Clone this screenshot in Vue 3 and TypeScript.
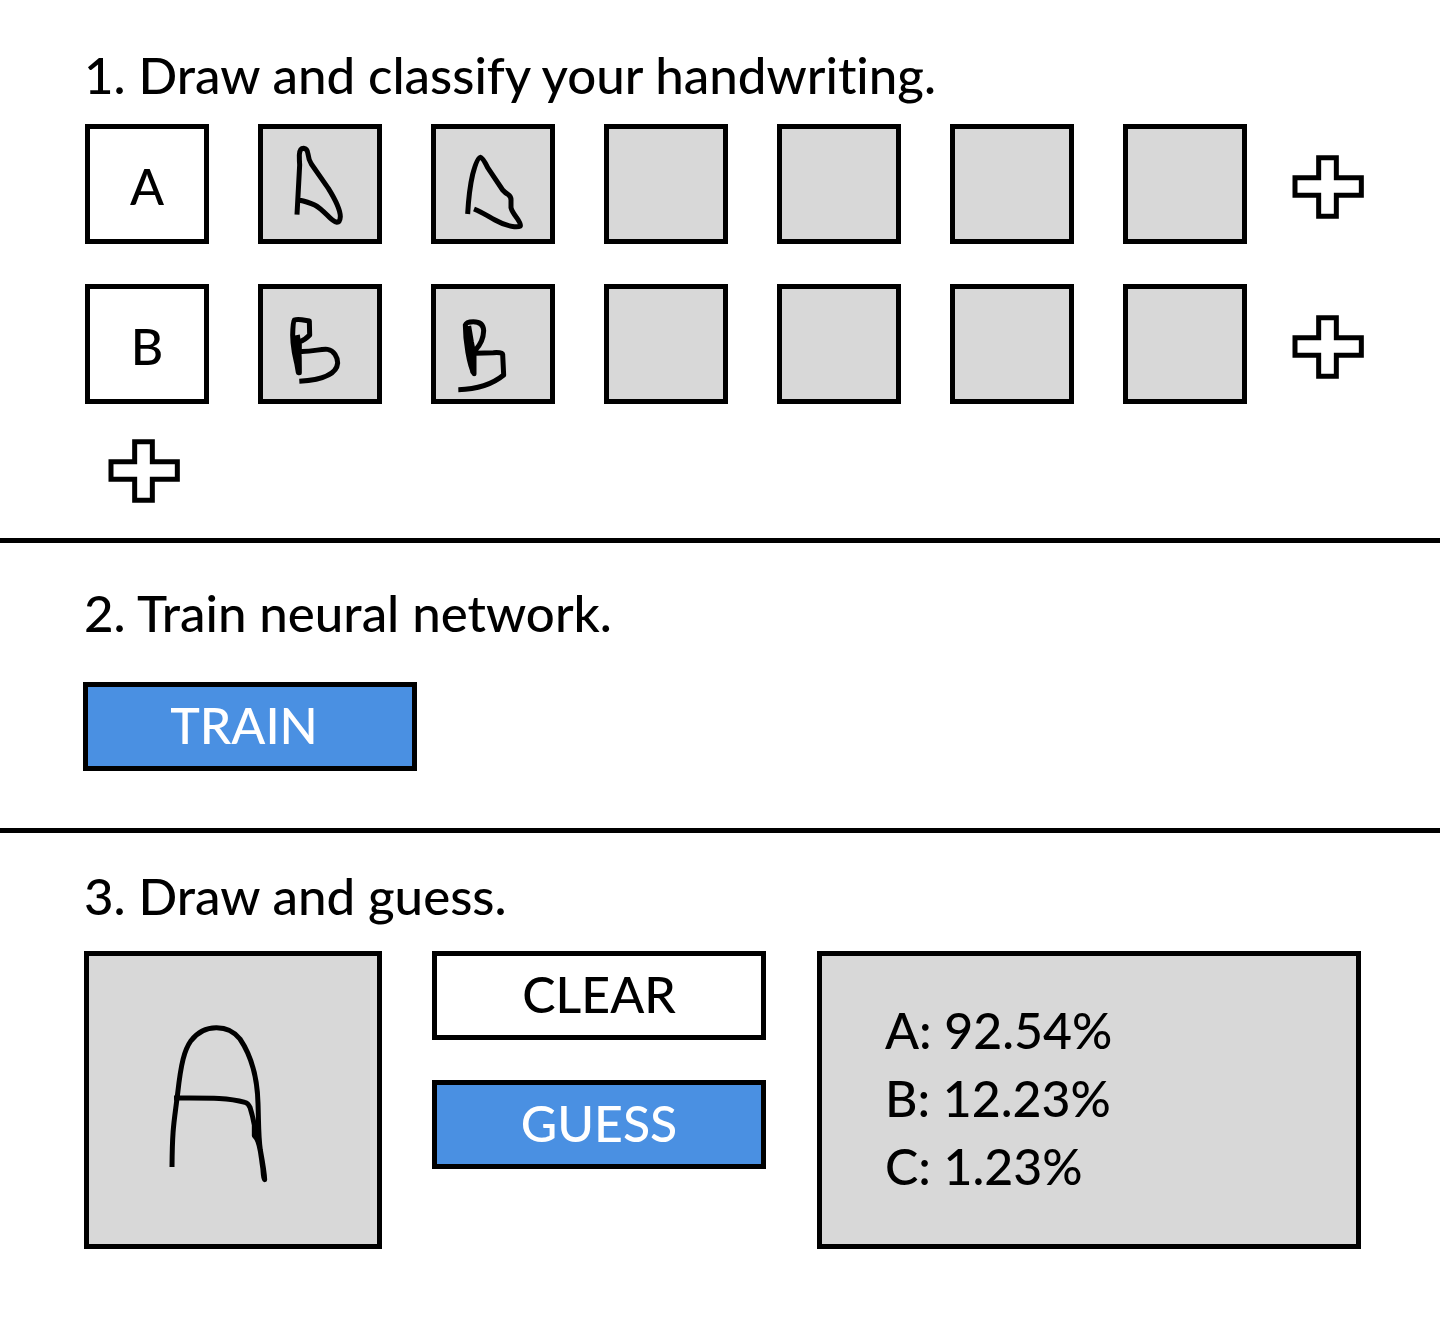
<script setup lang="ts">
interface Sketch {
  viewBox: string
  path: string
}

interface SampleRow {
  label: string
  samples: (Sketch | null)[]
}

interface Guess {
  label: string
  score: string
}

const plusPath = 'M116 53H169V113H244V166H169V229H116V166H45V113H116Z'

const rows: SampleRow[] = [
  {
    label: 'A',
    samples: [
      {
        viewBox: '39 42 342 330',
        path: 'M141 299L149 150C148 138 148 132 148 120Q149 100 161 100Q172 101 174 117Q176 134 184 147L235 220Q271 278 271 305Q270 322 261 322Q250 320 232 301Q208 277 194 270Q175 261 146 255',
      },
      {
        viewBox: '33 42 342 330',
        path: 'M128 297Q132 225 143 178Q156 129 166 127Q173 128 188 158L233 225Q240 233 250 239Q259 245 258 258V278Q261 290 275 308Q288 327 286 333Q281 336 268 335Q240 332 210 315C188 303 170 291 147 282',
      },
      null,
      null,
      null,
      null,
    ],
  },
  {
    label: 'B',
    samples: [
      {
        viewBox: '39 42 342 330',
        path: 'M142 180C149 215 148 260 148 293C138 260 128 215 128 180Q129 140 133 135Q140 132 155 134L178 138L179 180Q165 195 148 201V229C205 232 235 208 255 238Q263 250 263 264C260 300 210 315 148 319M148 293L145 293L136 240L136 190',
      },
      {
        viewBox: '33 42 342 330',
        path: 'M131 153L139 200L147 240V296C133 270 121 200 121 150Q124 140 145 140Q175 140 176 167Q175 200 152 224V235L205 233Q232 231 233 238L236 300Q185 342 100 344M147 294L143 290L134 240L130 180M147 294L141 240L135 190',
      },
      null,
      null,
      null,
      null,
    ],
  },
]

const drawing: Sketch = {
  viewBox: '42 48 864 864',
  path: 'M291 681C292 560 297 550 308 460C318 370 328 330 348 302C388 250 460 252 495 297C530 349 547 410 549 490C551 545 550 590 556 630Q568 695 569 719C563 710 566 695 562 675C557 640 555 600 538 587V555Q533 528 525 502Q519 489 510 487C455 472 400 474 297 474',
}

const guesses: Guess[] = [
  { label: 'A', score: '92.54%' },
  { label: 'B', score: '12.23%' },
  { label: 'C', score: '1.23%' },
]
</script>

<template>
  <main class="page">
    <section class="step collect">
      <h2>1. Draw and classify your handwriting.</h2>
      <div class="rows">
        <div v-for="row in rows" :key="row.label" class="row">
          <div class="cell label">{{ row.label }}</div>
          <div v-for="(sample, i) in row.samples" :key="i" class="cell sample">
            <svg v-if="sample" :viewBox="sample.viewBox" class="sketch">
              <path :d="sample.path" />
            </svg>
          </div>
          <button type="button" class="add add-sample" :aria-label="`Add sample for ${row.label}`">
            <svg viewBox="36 45 216 192" class="plus"><path :d="plusPath" /></svg>
          </button>
        </div>
      </div>
      <button type="button" class="add add-row" aria-label="Add class">
        <svg viewBox="36 45 216 192" class="plus"><path :d="plusPath" /></svg>
      </button>
    </section>

    <section class="step train">
      <h2>2. Train neural network.</h2>
      <button type="button" class="action primary train-action">TRAIN</button>
    </section>

    <section class="step guess">
      <h2>3. Draw and guess.</h2>
      <div class="board">
        <div class="pad">
          <svg :viewBox="drawing.viewBox" class="sketch"><path :d="drawing.path" /></svg>
        </div>
        <div class="actions">
          <button type="button" class="action">CLEAR</button>
          <button type="button" class="action primary">GUESS</button>
        </div>
        <ul class="results">
          <li v-for="g in guesses" :key="g.label">{{ g.label }}: {{ g.score }}</li>
        </ul>
      </div>
    </section>
  </main>
</template>

<style>
body {
  margin: 0;
  background: #fff;
}
</style>

<style scoped>
.page {
  color: #000;
  font-family: Lato, "Open Sans", sans-serif;
  font-size: 50px;
  font-variant-ligatures: none;
  font-weight: 500;
  line-height: 60px;
}

.step {
  box-sizing: border-box;
  padding: 0 79px 0 84px;
}

.step + .step {
  border-top: 5px solid #000;
}

h2 {
  margin: 0;
  font-size: 51px;
  font-weight: 500;
}

.collect {
  padding: 45px 76px 35px 84px;
}

.rows {
  display: flex;
  flex-direction: column;
  gap: 40px;
  margin: 19px 0 0 1px;
}

.row {
  display: flex;
  align-items: center;
  gap: 49px;
}

.cell {
  display: flex;
  flex: none;
  align-items: center;
  justify-content: center;
  box-sizing: border-box;
  width: 124px;
  height: 120px;
  border: 5px solid #000;
}

.label {
  padding-top: 3px;
}

.sample,
.pad,
.results {
  background: #d8d8d8;
}

.sketch {
  display: block;
  width: 100%;
  height: 100%;
}

.sketch path,
.plus path {
  fill: none;
  stroke: #000;
  stroke-width: 15;
}

.sketch path {
  stroke-linejoin: round;
}

.add {
  display: block;
  flex: none;
  padding: 0;
  border: 0;
  background: none;
  cursor: pointer;
}

.add-sample {
  margin-left: -4px;
  margin-top: 6px;
}

.add-row {
  margin: 35px 0 0 24px;
}

.plus {
  display: block;
  width: 72px;
  height: 64px;
}

.train {
  padding-top: 40px;
  padding-bottom: 57px;
}

.action {
  display: block;
  box-sizing: border-box;
  width: 334px;
  height: 89px;
  padding: 0 0 4px;
  border: 5px solid #000;
  background: #fff;
  color: #000;
  font: inherit;
  font-variant-ligatures: none;
  cursor: pointer;
}

.primary {
  background: #4a90e2;
  color: #fff;
}

.train-action {
  margin: 39px 0 0 -1px;
  padding-right: 12px;
}

.guess {
  padding-top: 33px;
  padding-bottom: 75px;
}

.board {
  display: flex;
  align-items: flex-start;
  margin-top: 25px;
}

.pad {
  flex: none;
  box-sizing: border-box;
  width: 298px;
  height: 298px;
  border: 5px solid #000;
}

.actions {
  display: flex;
  flex-direction: column;
  gap: 40px;
  margin: 0 51px 0 50px;
}

.results {
  flex: 1;
  align-self: stretch;
  box-sizing: border-box;
  margin: 0;
  padding: 40px 63px 0;
  border: 5px solid #000;
  line-height: 68px;
  list-style: none;
}
</style>
